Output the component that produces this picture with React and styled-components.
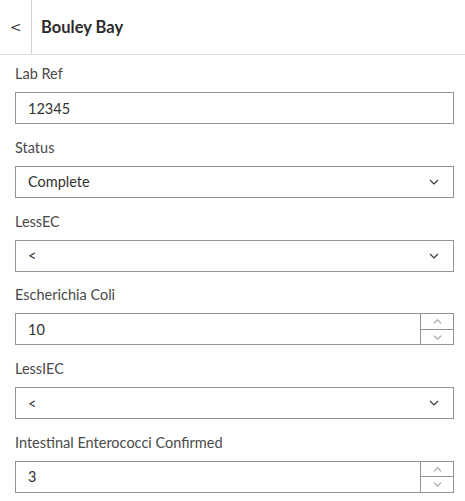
import styled, { createGlobalStyle } from "styled-components"

const GlobalStyle = createGlobalStyle`
  body {
    margin: 0;
    background: #ffffff;
    font-family: Lato, "Open Sans", sans-serif;
    color: #323232;
  }
`

const fields = [
    { label: "Lab Ref", type: "text", value: "12345" },
    { label: "Status", type: "select", value: "Complete" },
    { label: "LessEC", type: "select", value: "<" },
    { label: "Escherichia Coli", type: "number", value: "10" },
    { label: "LessIEC", type: "select", value: "<" },
    { label: "Intestinal Enterococci Confirmed", type: "number", value: "3" },
]

function Chevron({ dir = "down", color = "#4a4a4a", size = 10 }) {
    const pts = {
        down: "1,3 5,7 9,3",
        up: "1,7 5,3 9,7",
    }[dir]
    return (
        <svg width={size} height={size} viewBox="0 0 10 10">
            <polyline points={pts} fill="none" stroke={color} strokeWidth="1.2" />
        </svg>
    )
}

export default function App() {
    return (
        <>
            <GlobalStyle />
            <Panel>
                <Header>
                    <BackButton>&lt;</BackButton>
                    <Title>Bouley Bay</Title>
                </Header>
                <Form>
                    {fields.map((f) => (
                        <Field key={f.label}>
                            <Label>{f.label}</Label>
                            <InputBox>
                                <Value>{f.value}</Value>
                                {f.type === "select" && (
                                    <SelectArrow>
                                        <Chevron dir="down" color="#3a3a3a" size={10} />
                                    </SelectArrow>
                                )}
                                {f.type === "number" && (
                                    <Spinner>
                                        <SpinButton>
                                            <Chevron dir="up" color="#9a9a9a" size={9} />
                                        </SpinButton>
                                        <SpinButton $last>
                                            <Chevron dir="down" color="#9a9a9a" size={9} />
                                        </SpinButton>
                                    </Spinner>
                                )}
                            </InputBox>
                        </Field>
                    ))}
                </Form>
            </Panel>
        </>
    )
}

const Panel = styled.div`
width: 465px;
height: 501px;
overflow: hidden;
background: #fff;
`

const Header = styled.div`
display: flex;
align-items: stretch;
height: 54px;
border-bottom: 1px solid #dedede;
`

const BackButton = styled.div`
width: 31px;
display: flex;
align-items: center;
justify-content: center;
border-right: 1px solid #d0d0d0;
font-family: "DejaVu Sans", sans-serif;
font-size: 14px;
color: #3c3c3c;
`

const Title = styled.h1`
margin: 0;
padding-left: 9px;
display: flex;
align-items: center;
font-size: 16.5px;
font-weight: 700;
color: #2b2b2b;
`

const Form = styled.div`
padding: 9px 11px 0 15px;
display: flex;
flex-direction: column;
gap: 13.8px;
`

const Field = styled.div`
display: flex;
flex-direction: column;
gap: 8px;
`

const Label = styled.div`
font-size: 14.5px;
line-height: 20px;
color: #4a4a4a;
`

const InputBox = styled.div`
display: flex;
align-items: stretch;
height: 32px;
box-sizing: border-box;
border: 1px solid #949494;
background: #fff;
`

const Value = styled.div`
flex: 1;
display: flex;
align-items: center;
padding-left: 12px;
font-size: 14.5px;
color: #323232;
`

const SelectArrow = styled.div`
width: 38px;
display: flex;
align-items: center;
justify-content: center;
`

const Spinner = styled.div`
width: 32px;
display: flex;
flex-direction: column;
border-left: 1px solid #949494;
`

const SpinButton = styled.div`
flex: 1;
display: flex;
align-items: center;
justify-content: center;
border-top: ${(p) => (p.$last ? "1px solid #949494" : "none")};
`
